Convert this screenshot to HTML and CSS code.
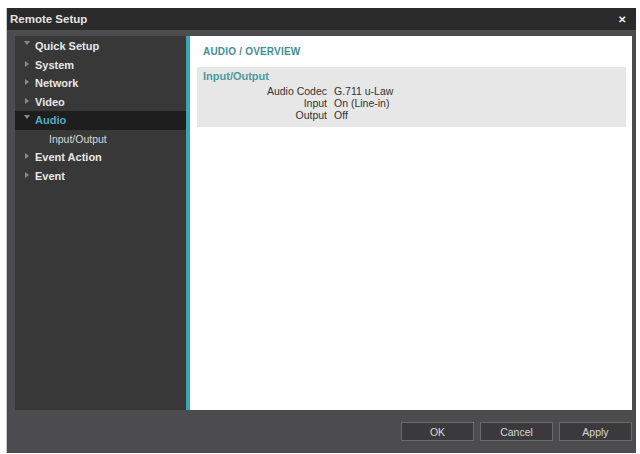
FILE: index.html
```html
<!DOCTYPE html>
<html>
<head>
<meta charset="utf-8">
<link rel="stylesheet" href="styles.css">
</head>
<body>
<div class="window">
  <div class="titlebar">
    <span class="title">Remote Setup</span>
    <span class="close">&#x2715;</span>
  </div>
  <div class="main">
    <nav class="sidebar">
      <div class="item"><span class="arrow down"></span>Quick Setup</div>
      <div class="item"><span class="arrow"></span>System</div>
      <div class="item"><span class="arrow"></span>Network</div>
      <div class="item"><span class="arrow"></span>Video</div>
      <div class="item selected"><span class="arrow down"></span>Audio</div>
      <div class="item sub">Input/Output</div>
      <div class="item"><span class="arrow"></span>Event Action</div>
      <div class="item"><span class="arrow"></span>Event</div>
    </nav>
    <section class="content">
      <h1 class="heading">AUDIO / OVERVIEW</h1>
      <div class="group">
        <div class="group-title">Input/Output</div>
        <div class="rows">
          <span class="label">Audio Codec</span><span class="value">G.711 u-Law</span>
          <span class="label">Input</span><span class="value">On (Line-in)</span>
          <span class="label">Output</span><span class="value">Off</span>
        </div>
      </div>
    </section>
  </div>
  <div class="footer">
    <button class="btn">OK</button>
    <button class="btn">Cancel</button>
    <button class="btn">Apply</button>
  </div>
</div>
</body>
</html>
```

FILE: styles.css
```css
html, body {
  margin: 0;
  padding: 0;
  background: #ffffff;
}
body {
  font-family: "Liberation Sans", Arial, sans-serif;
  width: 640px;
  height: 454px;
  overflow: hidden;
}
.window {
  margin: 8px 0 0 7px;
  width: 629px;
  height: 445px;
  background: #4c4c4f;
  display: flex;
  flex-direction: column;
  box-shadow: -1px 0 0 #c8c8c8;
}
.titlebar {
  height: 22px;
  flex: none;
  background: #2a2a2a;
  display: flex;
  align-items: center;
  justify-content: space-between;
  padding: 0 10px 0 3px;
}
.title {
  color: #e4e4e4;
  font-weight: bold;
  font-size: 11.5px;
}
.close {
  color: #f0f0f0;
  font-size: 10px;
  font-weight: bold;
}
.main {
  flex: none;
  height: 374px;
  margin: 6px 4px 0 8px;
  display: flex;
}
.sidebar {
  width: 171px;
  flex: none;
  background: #383838;
  border-right: 4px solid #3aa6b2;
  padding-top: 1px;
  box-sizing: content-box;
}
.item {
  height: 18.5px;
  display: flex;
  align-items: center;
  padding-left: 9px;
  color: #e8e8e8;
  font-size: 11px;
  font-weight: bold;
}
.item.selected {
  background: #1e1e1e;
  color: #56a9c6;
}
.item.sub {
  padding-left: 34px;
  font-weight: normal;
  font-size: 10.5px;
  color: #d8d8d8;
}
.arrow {
  width: 0;
  height: 0;
  border-top: 3px solid transparent;
  border-bottom: 3px solid transparent;
  border-left: 4px solid #8a8a8a;
  margin-right: 6px;
  margin-left: 1px;
  margin-top: -2px;
}
.arrow.down {
  border-left: 3px solid transparent;
  border-right: 3px solid transparent;
  border-top: 4px solid #8a8a8a;
  border-bottom: 0;
  margin-left: 0;
  margin-right: 5px;
  margin-top: -6px;
}
.content {
  flex: 1;
  background: #ffffff;
  padding: 8px 6px 0 7px;
}
.heading {
  margin: 0 0 0 6px;
  font-size: 10px;
  font-weight: bold;
  color: #3f8f97;
  height: 15px;
  line-height: 15px;
  letter-spacing: 0.2px;
}
.group {
  margin-top: 8px;
  background: #e7e7e7;
  height: 60px;
  padding: 3px 6px 0 6px;
  box-sizing: border-box;
}
.group-title {
  font-size: 11px;
  font-weight: bold;
  color: #4a9aa0;
  height: 13px;
  line-height: 13px;
}
.rows {
  display: grid;
  grid-template-columns: 124px auto;
  column-gap: 7px;
  justify-content: start;
  margin-top: 2px;
  font-size: 10.5px;
  color: #333;
  line-height: 12px;
}
.label {
  text-align: right;
}
.footer {
  flex: 1;
  display: flex;
  justify-content: flex-end;
  align-items: flex-start;
  gap: 6px;
  padding: 12px 4px 0 0;
}
.btn {
  width: 73px;
  height: 19px;
  background: #3a3a3c;
  border: 1px solid #6a6a6c;
  color: #d8d8d8;
  font-family: "Liberation Sans", Arial, sans-serif;
  font-size: 10.5px;
  padding: 0;
}
```
